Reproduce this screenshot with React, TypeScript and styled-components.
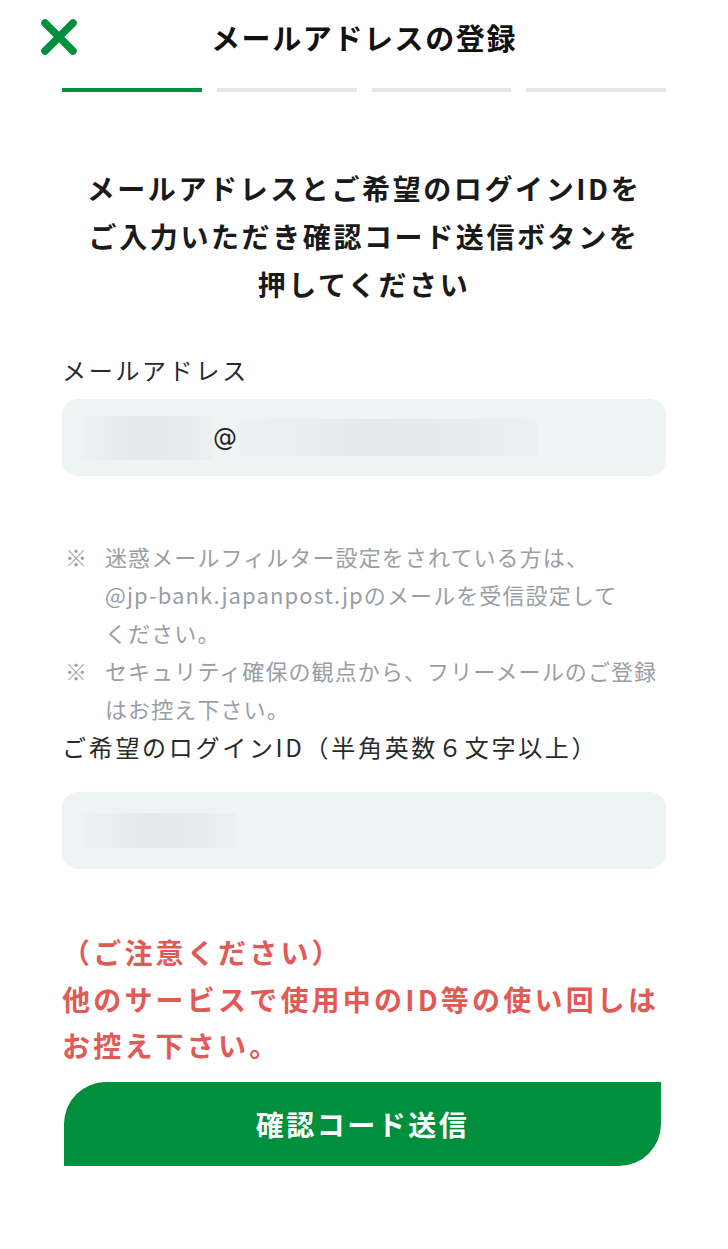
import React from 'react';
import styled, {createGlobalStyle} from 'styled-components';

const GREEN = '#008f3d';
const RED = '#e25a55';

const GlobalStyle = createGlobalStyle`
    * {
        box-sizing: border-box;
    }
    body {
        margin: 0;
        background: #ffffff;
        font-family: "Noto Sans CJK JP", "Noto Sans", sans-serif;
        color: #1a1a1a;
    }
`

const Page = styled.div`
    width: 728px;
    min-height: 1249px;
    background: #ffffff;
`

const Header = styled.header`
    display: grid;
    grid-template-columns: 38px 1fr 38px;
    align-items: center;
    height: 74px;
    padding: 0 40px;
`

const CloseButton = styled.button`
    display: flex;
    align-items: center;
    justify-content: center;
    width: 38px;
    height: 36px;
    padding: 0;
    border: none;
    background: none;
`

const Title = styled.h1`
    margin: 0;
    text-align: center;
    font-size: 29px;
    font-weight: 700;
    letter-spacing: 1.6px;
    color: #111;
`

const Progress = styled.div`
    display: grid;
    grid-template-columns: repeat(4, 1fr);
    gap: 15px;
    padding: 0 62px;
    margin-top: 14px;
`

const Step = styled.div<{ $active?: boolean }>`
    height: 4px;
    background: ${p => (p.$active ? GREEN : '#e5e5ea')};
`

const Content = styled.main`
    padding: 0 62px;
`

const Lead = styled.h2`
    margin: 72px 0 0;
    text-align: center;
    font-size: 28px;
    line-height: 48px;
    font-weight: 700;
    letter-spacing: 2.6px;
    color: #1a1a1a;
`

const Label = styled.div<{ $top: number }>`
    margin-top: ${p => p.$top}px;
    font-size: 24px;
    line-height: 36px;
    letter-spacing: 2.7px;
    color: #2a2a2a;
    white-space: nowrap;
`

const Field = styled.div<{ $top: number }>`
    display: flex;
    align-items: center;
    height: 77px;
    margin-top: ${p => p.$top}px;
    padding: 0 20px;
    border-radius: 16px;
    background: #eef3f3;
`

const Blur = styled.span<{ $w: number; $h: number }>`
    display: block;
    width: ${p => p.$w}px;
    height: ${p => p.$h}px;
    background: linear-gradient(90deg, #eef0f1 0%, #e6e8e9 45%, #e9ebec 80%, #edf0f1 100%);
`

const At = styled.span`
    font-family: "DejaVu Sans", sans-serif;
    font-size: 24px;
    color: #222;
    margin: 0 2px 0 1px;
`

const Notes = styled.ul`
    list-style: none;
    margin: 61px 0 0;
    padding: 0;
`

const Note = styled.li`
    display: grid;
    grid-template-columns: 43px 1fr;
    font-size: 22px;
    line-height: 38px;
    letter-spacing: 1.1px;
    color: #999ea5;
`

const Mark = styled.span`
    padding-left: 3px;
`

const Caution = styled.p`
    margin: 60px 0 0;
    font-size: 28px;
    line-height: 46.5px;
    font-weight: 700;
    letter-spacing: 3.2px;
    color: ${RED};
    white-space: nowrap;
`

const SubmitButton = styled.button`
    display: block;
    width: 597px;
    height: 84px;
    margin: 13px 0 0 2px;
    border: none;
    border-radius: 42px 0 42px 0;
    background: ${GREEN};
    color: #ffffff;
    font-family: inherit;
    font-size: 28px;
    font-weight: 700;
    letter-spacing: 2.5px;
`

const CloseIcon = () => (
    <svg width="38" height="36" viewBox="0 0 38 36">
        <path d="M5 4 L33 32 M33 4 L5 32" stroke={GREEN} strokeWidth="7.5" strokeLinecap="round" fill="none"/>
    </svg>
);

export default function App() {
    return (
        <Page>
            <GlobalStyle/>
            <Header>
                <CloseButton aria-label="閉じる"><CloseIcon/></CloseButton>
                <Title>メールアドレスの登録</Title>
                <span/>
            </Header>
            <Progress>
                <Step $active/>
                <Step/>
                <Step/>
                <Step/>
            </Progress>

            <Content>
                <Lead>
                    メールアドレスとご希望のログインIDを<br/>
                    ご入力いただき確認コード送信ボタンを<br/>
                    押してください
                </Lead>

                <Label $top={44}>メールアドレス</Label>
                <Field $top={11}>
                    <Blur $w={130} $h={44}/>
                    <At>@</At>
                    <Blur $w={298} $h={37}/>
                </Field>

                <Notes>
                    <Note>
                        <Mark>※</Mark>
                        <span>迷惑メールフィルター設定をされている方は、<br/>@jp-bank.japanpost.jpのメールを受信設定して<br/>ください。</span>
                    </Note>
                    <Note>
                        <Mark>※</Mark>
                        <span>セキュリティ確保の観点から、フリーメールのご登録<br/>はお控え下さい。</span>
                    </Note>
                </Notes>

                <Label $top={2}>ご希望のログインID（半角英数６文字以上）</Label>
                <Field $top={27}>
                    <Blur $w={154} $h={35}/>
                </Field>

                <Caution>
                    （ご注意ください）<br/>
                    他のサービスで使用中のID等の使い回しは<br/>
                    お控え下さい。
                </Caution>

                <SubmitButton>確認コード送信</SubmitButton>
            </Content>
        </Page>
    );
}
